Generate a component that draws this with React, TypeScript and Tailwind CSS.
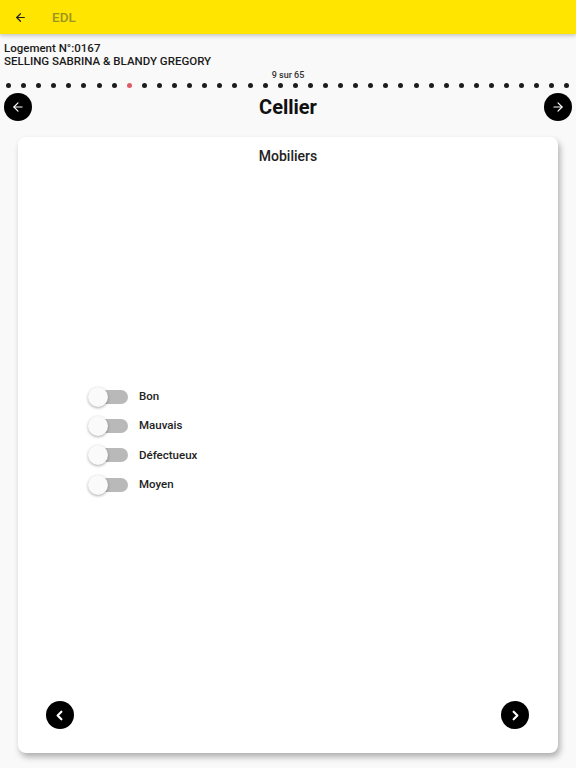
import { ArrowLeft, ArrowRight, ChevronLeft, ChevronRight } from 'lucide-react';

const TOTAL_DOTS = 38;
const CURRENT_DOT = 8;

const etats = ['Bon', 'Mauvais', 'Défectueux', 'Moyen'];

function Toggle() {
  return (
    <div className="relative w-[40px] h-[20px] flex items-center">
      <div className="ml-[6px] w-[34px] h-[14px] rounded-full bg-[#b9b9b9]" />
      <div className="absolute left-0 top-0 w-[20px] h-[20px] rounded-full bg-[#fafafa] shadow-[0_1px_3px_rgba(0,0,0,0.35)]" />
    </div>
  );
}

function RoundButton({ children }: { children: React.ReactNode }) {
  return (
    <div className="w-[28px] h-[28px] rounded-full bg-black flex items-center justify-center">
      {children}
    </div>
  );
}

export default function App() {
  return (
    <div className="w-[576px] h-[768px] overflow-hidden bg-[#f9f9f9] font-['Roboto',sans-serif] text-[#1b1b1b]">
      {/* header */}
      <div className="h-[34px] bg-[#ffe500] flex items-center shadow-[0_2px_4px_rgba(0,0,0,0.2)] relative">
        <ArrowLeft className="ml-[14px] text-[#222]" size={13} strokeWidth={2.2} />
        <span className="ml-[25px] text-[13.5px] font-medium text-[#9a9424]">EDL</span>
      </div>

      {/* logement */}
      <div className="pt-[8px] px-[4px] text-[11.5px] leading-[13px] font-medium">
        <div>Logement N°:0167</div>
        <div>SELLING SABRINA &amp; BLANDY GREGORY</div>
      </div>

      <div className="mt-[2px] text-center text-[9px] leading-[10px] font-medium text-[#333]">9 sur 65</div>

      <div className="mt-[3px] px-[6px] flex justify-between">
        {Array.from({ length: TOTAL_DOTS }).map((_, i) => (
          <div
            key={i}
            className={`w-[5px] h-[5px] rounded-full ${i === CURRENT_DOT ? 'bg-[#e05a66]' : 'bg-[#1c1c1c]'}`}
          />
        ))}
      </div>

      {/* room nav */}
      <div className="mt-[6px] px-[4px] h-[26px] flex items-center justify-between">
        <RoundButton>
          <ArrowLeft className="text-white" size={14} strokeWidth={2} />
        </RoundButton>
        <span className="text-[20px] font-bold text-[#111]">Cellier</span>
        <RoundButton>
          <ArrowRight className="text-white" size={14} strokeWidth={2} />
        </RoundButton>
      </div>

      {/* card */}
      <div className="mt-[17px] ml-[18px] w-[540px] h-[616px] bg-white rounded-[8px] shadow-[2px_4px_6px_rgba(0,0,0,0.3)] flex flex-col">
        <div className="pt-[11px] text-center text-[14px] leading-[16px] font-medium text-[#222]">Mobiliers</div>

        <div className="mt-[218px] pl-[70px] flex flex-col">
          {etats.map((e) => (
            <div key={e} className="h-[29.4px] flex items-center">
              <Toggle />
              <span className="ml-[11px] text-[11.5px] font-medium text-[#222]">{e}</span>
            </div>
          ))}
        </div>

        <div className="flex-1" />

        <div className="pl-[28px] pr-[29px] pb-[24px] flex justify-between">
          <RoundButton>
            <ChevronLeft className="text-white -ml-[1px]" size={15} strokeWidth={3.5} />
          </RoundButton>
          <RoundButton>
            <ChevronRight className="text-white ml-[1px]" size={15} strokeWidth={3.5} />
          </RoundButton>
        </div>
      </div>
    </div>
  );
}
